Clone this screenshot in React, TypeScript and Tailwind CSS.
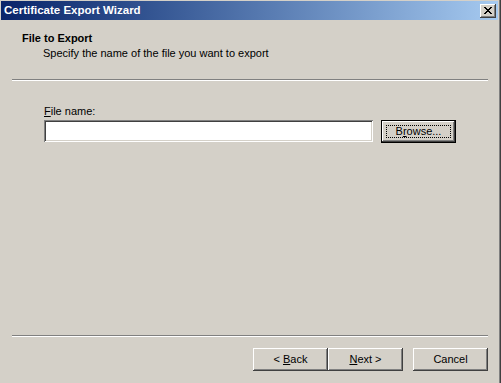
import React from "react";

const font = { fontFamily: '"Liberation Sans", Arial, sans-serif' };

const bevel =
  "shadow-[inset_-1px_-1px_#404040,inset_1px_1px_#ffffff,inset_-2px_-2px_#808080,inset_2px_2px_#d4d0c8]";

function WinButton({ children, isDefault = false, className = "" }: { children: React.ReactNode; isDefault?: boolean; className?: string }) {
  if (isDefault) {
    return (
      <button className={`relative h-[23px] w-[75px] border border-black bg-[#d4d0c8] p-0 text-[11px] text-black ${className}`}>
        <span className={`flex h-full w-full items-center justify-center ${bevel}`}>
          <span className="absolute inset-[4px] border border-dotted border-black" />
          <span className="relative">{children}</span>
        </span>
      </button>
    );
  }
  return (
    <button className={`flex h-[23px] w-[75px] items-center justify-center bg-[#d4d0c8] text-[11px] text-black ${bevel} ${className}`}>
      {children}
    </button>
  );
}

export default function App() {
  return (
    <div className="h-[383px] w-[501px] overflow-hidden bg-[#d4d0c8] text-[11px] leading-[13px] text-black" style={font}>
      <div className="flex h-full border-r border-[#404040]">
        <div className="flex flex-1 flex-col border-r border-[#808080] pl-px pr-px pt-px">
          {/* title bar */}
          <div className="flex h-[19px] items-center justify-between bg-gradient-to-r from-[#0a246a] to-[#a6caf0] pl-[3px] pr-[2px]">
            <span className="text-[11.5px] font-bold text-white">Certificate Export Wizard</span>
            <div className={`flex h-[14px] w-[16px] items-center justify-center bg-[#d4d0c8] ${bevel}`}>
              <svg width="8" height="7" viewBox="0 0 8 7" shapeRendering="crispEdges">
                <path d="M0 0h2v1H0zM6 0h2v1H6zM1 1h2v1H1zM5 1h2v1H5zM2 2h4v1H2zM3 3h2v1H3zM2 4h4v1H2zM1 5h2v1H1zM5 5h2v1H5zM0 6h2v1H0zM6 6h2v1H6z" fill="#000" />
              </svg>
            </div>
          </div>

          {/* header */}
          <div className="pl-[21px] pt-[12px]">
            <div className="font-bold">File to Export</div>
            <div className="pl-[21px] pt-[2px]">Specify the name of the file you want to export</div>
          </div>
          <div className="ml-[11px] mr-[10px] mt-[19px] h-[2px] border-t border-b border-t-[#808080] border-b-white" />

          {/* body */}
          <div className="pl-[43px] pt-[24px]">
            <div>
              <span className="underline">F</span>ile name:
            </div>
            <div className="mt-[2px] flex items-start gap-[8px]">
              <div className="h-[22px] w-[329px] bg-white shadow-[inset_1px_1px_#808080,inset_-1px_-1px_#ffffff,inset_2px_2px_#404040,inset_-2px_-2px_#d4d0c8]" />
              <WinButton isDefault>
                B<span className="underline">r</span>owse...
              </WinButton>
            </div>
          </div>

          <div className="flex-1" />

          {/* footer */}
          <div className="ml-[11px] mr-[10px] h-[2px] border-t border-b border-t-[#808080] border-b-white" />
          <div className="flex justify-end pb-[12px] pr-[10px] pt-[11px]">
            <WinButton>
              &lt; <span className="ml-[3px] underline">B</span>ack
            </WinButton>
            <WinButton>
              <span className="underline">N</span>ext &gt;
            </WinButton>
            <WinButton className="ml-[10px]">Cancel</WinButton>
          </div>
        </div>
      </div>
    </div>
  );
}
